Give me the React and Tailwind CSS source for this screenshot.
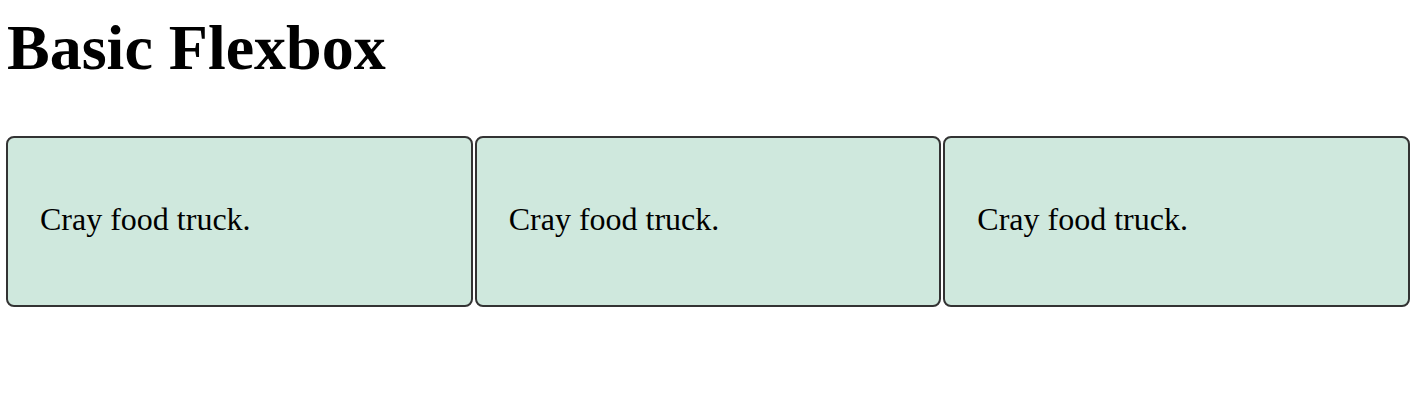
export default function App() {
  const items = ['Cray food truck.', 'Cray food truck.', 'Cray food truck.'];

  return (
    <div className="min-h-[400px] bg-white text-black font-['Liberation_Serif','Times_New_Roman',serif] pl-[6px] pr-[8px]">
      <h1 className="pt-[13px] pl-px text-[64px] leading-[1.107] font-bold">Basic Flexbox</h1>

      <div className="mt-[52px] flex gap-[2px]">
        {items.map((text, i) => (
          <div
            key={i}
            className="flex-1 rounded-[8px] border-2 border-[#333333] bg-[#cfe8dd] px-[32px] pt-[64px] pb-[68px]"
          >
            <p className="text-[32px] leading-[1.107]">{text}</p>
          </div>
        ))}
      </div>
    </div>
  );
}
